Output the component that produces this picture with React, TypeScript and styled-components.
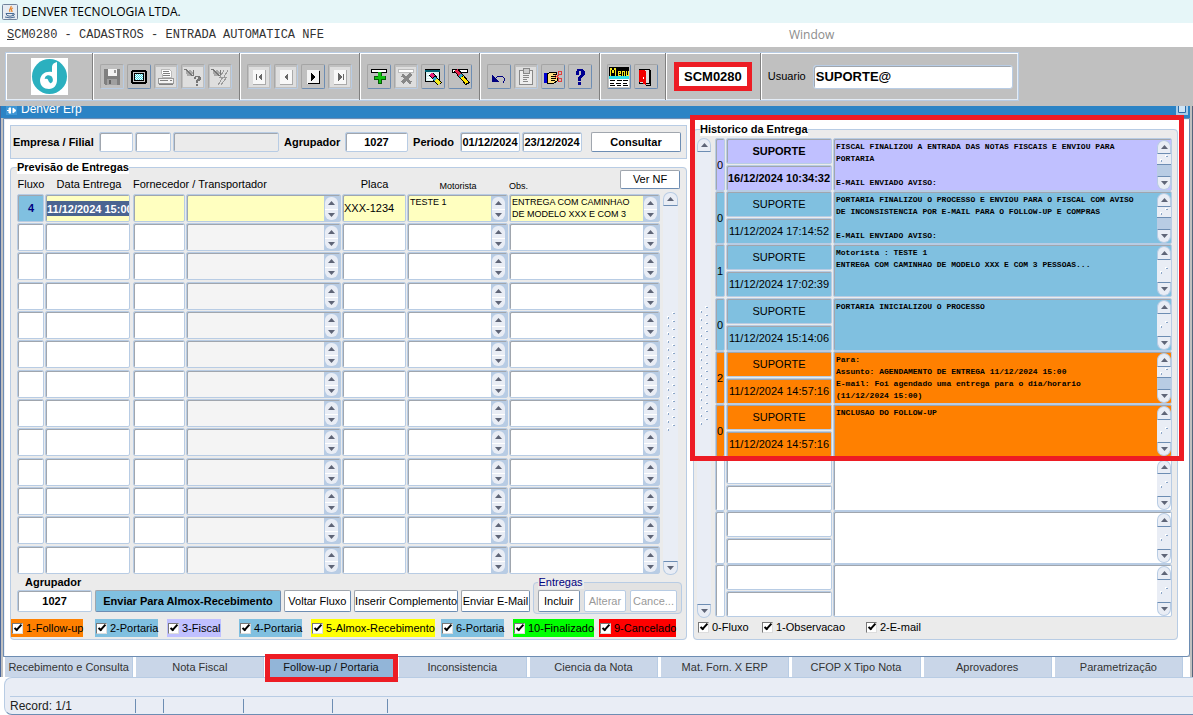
import React from "react";
import styled, { createGlobalStyle, css } from "styled-components";

const c = {
  gray: "#c0c0c0",
  line: "#b8cce4",
  steel: "#6d8db3",
  shade: "#a0a6ae",
  panel: "#ebebeb",
  metal: "#e9edf5",
  blue: "#80c0e0",
  lilac: "#c0c0ff",
  orange: "#ff8000",
  yellow: "#ffffc0",
  red: "#ed1c24",
};

const Global = createGlobalStyle`
  *, *::before, *::after { box-sizing: border-box; }
  body { margin: 0; background: #fff; font: 11px/13px "Liberation Sans", Arial, sans-serif; color: #000; }
  button, input, textarea { font: inherit; color: inherit; border-radius: 0; margin: 0; }
`;

/* ---------- window chrome ---------- */

const TitleBar = styled.header`
  height: 23px;
  padding: 0 2px;
  display: flex;
  align-items: center;
  gap: 4px;
  background: #e6f6f8;
  font: 12px/16px "Open Sans", "Noto Sans", sans-serif;
`;

const MenuBar = styled.nav`
  height: 24px;
  padding: 0 7px;
  display: grid;
  grid-template-columns: 782px 1fr;
  align-items: center;
`;

const MenuItem = styled.button<{ $mono?: boolean }>`
  justify-self: start;
  padding: 0;
  border: 0;
  background: none;
  color: ${(p) => (p.$mono ? "#333" : "#8c8c8c")};
  font: ${(p) =>
    p.$mono
      ? '12px/16px "Liberation Mono", monospace'
      : '12px/16px "Open Sans", "Noto Sans", sans-serif'};
`;

const ToolArea = styled.div`
  padding: 5px 5px 5px;
  display: flex;
  background: ${c.gray};
`;

const ToolBox = styled.div`
  height: 49px;
  display: flex;
  border: 1px solid ${c.line};
  box-shadow: inset 1px 1px 0 #fff, inset -1px -1px 0 #e4ecf5;
`;

const Group = styled.div`
  padding: 0 7px;
  display: flex;
  align-items: center;
  gap: 3px;
  & + & {
    border-left: 1px solid #808080;
    box-shadow: inset 1px 0 0 #fff;
  }
  &:first-child {
    width: 86px;
    justify-content: center;
  }
`;

const UserGroup = styled(Group)`
  gap: 7px;
  padding: 0 5px 0 7px;
`;

const ToolButton = styled.button`
  width: 24px;
  height: 25px;
  padding: 0;
  display: grid;
  place-items: center;
  background: ${c.gray};
  border: 1px solid;
  border-color: #a5a5a5 ${c.steel} ${c.steel} #a5a5a5;
  border-radius: 2px;
  &:disabled {
    border-color: #a8a8a8 ${c.line} ${c.line} #a8a8a8;
  }
`;

const ProgramCode = styled.strong`
  padding: 0 5px;
  border: 5px solid ${c.red};
  background: #fff;
  font-size: 13px;
  line-height: 19px;
`;

const CodeGroup = styled(Group)`
  padding: 0 8px;
`;

const UserInput = styled.input`
  width: 200px;
  height: 24px;
  padding: 0 2px;
  border: 1px solid ${c.line};
  border-radius: 3px;
  box-shadow: inset 1px 1px 0 ${c.shade};
  font-size: 13px;
  font-weight: bold;
`;

const Frame = styled.div`
  padding: 0 2px;
  background: ${c.gray};
  border-left: 1px solid #4a689c;
  border-right: 1px solid #55657c;
`;

const BlueBar = styled.div`
  height: 12px;
  margin-left: -2px;
  padding: 0 2px 0 5px;
  display: flex;
  justify-content: space-between;
  overflow: hidden;
  background: #2b83c5;
  color: #fff;
  font-size: 12px;
  line-height: 6px;
`;

const BarTitle = styled.div`
  display: flex;
  gap: 4px;
`;

const Sheet = styled.main`
  padding: 4px 11px 16px 6px;
  display: grid;
  grid-template-columns: 677fr 485fr;
  gap: 6px;
  background: #fff;
  border: 1px solid ${c.steel};
  border-radius: 0 0 3px 0;
  box-shadow: inset 1px 1px 0 #e9eef6;
`;

const Left = styled.div`
  min-width: 0;
`;

/* ---------- fields and buttons ---------- */

const inset = css`
  border: 1px solid ${c.line};
  border-radius: 2px;
  box-shadow: inset 1px 1px 0 ${c.shade};
`;

const Field = styled.input<{ $w?: number; $grow?: boolean }>`
  ${inset}
  width: ${(p) => p.$w ?? 60}px;
  min-width: 0;
  flex: ${(p) => (p.$grow ? "1 1 auto" : "none")};
  height: 20px;
  padding: 0 1px;
  background: #fff;
  font-weight: bold;
  text-align: center;
  &:disabled {
    background: ${c.panel};
  }
`;

const Button = styled.button<{ $grow?: number; $h?: number; $bg?: string; $bold?: boolean }>`
  flex: ${(p) => (p.$grow ? `${p.$grow} 1 0` : "none")};
  min-width: 0;
  height: ${(p) => p.$h ?? 22}px;
  padding: 0;
  background: ${(p) => p.$bg ?? "#fff"};
  border: 1px solid;
  border-color: ${c.shade} ${c.steel} ${c.steel} ${c.shade};
  border-radius: 2px;
  font-weight: ${(p) => (p.$bold ? "bold" : "normal")};
  white-space: nowrap;
  &:disabled {
    color: #999;
    border-color: ${c.line};
  }
`;

const ConsultButton = styled(Button)`
  width: 90px;
  font-weight: bold;
`;

const FilterBox = styled.form`
  height: 34px;
  margin: 2px 0 2px;
  padding: 0 5px 0 2px;
  display: flex;
  align-items: center;
  gap: 2px;
  background: ${c.panel};
  border: 1px solid ${c.line};
  font-weight: bold;
`;

const FilterLabel = styled.label<{ $w: number }>`
  width: ${(p) => p.$w}px;
  white-space: nowrap;
`;

const Spacer = styled.span`
  width: 5px;
`;

const Panel = styled.fieldset`
  position: relative;
  min-width: 0;
  margin: 0;
  padding: 0 0 2px;
  background: ${c.panel};
  border: 1px solid ${c.line};
  border-radius: 4px;
`;

const PanelLegend = styled.legend`
  margin-left: 6px;
  padding: 0;
  background: #fff;
  font-weight: bold;
`;

/* ---------- scroll parts ---------- */

const Arrow = ({ down }: { down?: boolean }) => (
  <svg width="7" height="4" viewBox="0 0 7 4" aria-hidden>
    <path d={down ? "M0 0h7L3.500 4z" : "M0 4h7L3.500 0z"} fill="#5f6577" />
  </svg>
);

const ArrowButton = styled.button<{ $down?: boolean }>`
  width: 100%;
  height: 14px;
  padding: 0;
  display: grid;
  place-items: center;
  background: ${c.metal};
  border: 1px solid ${c.line};
  ${(p) =>
    p.$down
      ? `border-top-color: ${c.steel}; border-radius: 0 0 7px 7px;`
      : `border-bottom-color: ${c.steel}; border-radius: 7px 7px 0 0;`}
`;

const Track = styled.div<{ $dots: "tall" | "short" | "half" }>`
  flex: 1;
  display: grid;
  background: ${(p) => (p.$dots === "half" ? c.line : c.metal)};
  place-items: ${(p) => (p.$dots === "half" ? "start stretch" : "center")};
  padding-bottom: ${(p) => (p.$dots === "tall" ? 24 : 0)}px;
`;

const Thumb = styled.div`
  height: 11px;
  display: grid;
  place-items: center;
  background: ${c.metal};
  border-bottom: 1px solid ${c.steel};
`;

const ScrollColumn = styled.div<{ $pad?: number; $w?: number }>`
  width: ${(p) => p.$w ?? 15}px;
  margin-top: ${(p) => p.$pad ?? 0}px;
  flex: none;
  display: flex;
  flex-direction: column;
`;

const Dots = ({ n }: { n: number }) => (
  <svg width="8" height={n * 8} viewBox={`0 0 8 ${n * 8}`} shapeRendering="crispEdges" aria-hidden>
    {Array.from({ length: n }, (_, i) => (
      <g key={i}>
        <path d={`M0 ${i * 8 + 4}h2v2h-2zM5 ${i * 8}h2v2h-2z`} fill="#fff" />
        <path d={`M1 ${i * 8 + 5}h1v1h-1zM1 ${i * 8 + 6}h1v1h-1zM6 ${i * 8 + 1}h2v1h-2z`} fill="#8ba6c8" />
      </g>
    ))}
  </svg>
);

const Scroll = ({ dots, pad, w }: { dots: "tall" | "short" | "half"; pad?: number; w?: number }) => (
  <ScrollColumn $pad={pad} $w={w}>
    <ArrowButton type="button" aria-label="Rolar para cima"><Arrow /></ArrowButton>
    <Track $dots={dots}>
      {dots === "tall" && <Dots n={15} />}
      {dots === "short" && <Dots n={1} />}
      {dots === "half" && <Thumb><Dots n={1} /></Thumb>}
    </Track>
    <ArrowButton type="button" $down aria-label="Rolar para baixo"><Arrow down /></ArrowButton>
  </ScrollColumn>
);

const SpinBox = styled.div`
  flex: none;
  width: 16px;
  padding: 1px 2px 1px 1px;
  display: grid;
  grid-template-rows: 1fr 1fr;
  background: ${c.line};
`;

const SpinButton = styled.button`
  padding: 0;
  border: 0;
  display: grid;
  place-items: center;
  background: ${c.metal};
  border-radius: 6px 6px 0 0;
  & + & {
    border-top: 1px solid #fff;
    border-radius: 0 0 6px 6px;
  }
`;

const Spin = () => (
  <SpinBox>
    <SpinButton type="button" aria-label="Linha anterior"><Arrow /></SpinButton>
    <SpinButton type="button" aria-label="Linha seguinte"><Arrow down /></SpinButton>
  </SpinBox>
);

/* ---------- deliveries table ---------- */

const VerNfRow = styled.div`
  margin: -4px 6px 0 0;
  display: flex;
  justify-content: flex-end;
`;

const VerNf = styled(Button)`
  width: 60px;
`;

const TableRow = styled.div`
  margin: -11px 8px 0 6px;
  display: flex;
  gap: 2px;
`;

const Table = styled.table`
  flex: 1;
  width: 0;
  table-layout: fixed;
  border-collapse: collapse;
  th, td { padding: 0; vertical-align: top; }
`;

const Head = styled.th<{ $left?: boolean; $small?: boolean }>`
  height: 14px;
  font-weight: normal;
  font-size: ${(p) => (p.$small ? 9 : 11)}px;
  line-height: ${(p) => (p.$small ? 16 : 12)}px;
  text-align: ${(p) => (p.$left ? "left" : "center")};
`;

const HeadRow = styled.tr`
  height: 14px;
`;

const DeliveryRow = styled.tr`
  height: 29px;
  &:nth-child(3n) { height: 30px; }
`;

const Cell = styled.div<{ $bg?: string; $gap?: number }>`
  ${inset}
  height: 28px;
  margin-right: ${(p) => p.$gap ?? 1}px;
  padding: 1px 0 0 1px;
  display: flex;
  background: ${(p) => p.$bg ?? "#fff"};
`;

const CellInput = styled.input<{ $selected?: boolean; $center?: boolean; $color?: string }>`
  flex: 1;
  min-width: 0;
  width: 0;
  padding: 0;
  border: 0;
  background: none;
  outline: 0;
  text-align: ${(p) => (p.$center ? "center" : "left")};
  ${(p) => p.$color && `color: ${p.$color}; font-weight: bold;`}
  ${(p) =>
    p.$selected &&
    "height: 15px; margin-top: 5px; background: #4a6491; color: #fff; font-weight: bold;"}
`;

const CellText = styled.textarea`
  flex: 1;
  min-width: 0;
  width: 0;
  padding: 0 0 0 1px;
  border: 0;
  background: none;
  outline: 0;
  resize: none;
  overflow: hidden;
  font-size: 9px;
  line-height: 12px;
`;

const deliveries = [
  { fluxo: "4", data: "11/12/2024 15:00", placa: "XXX-1234", motorista: "TESTE 1", obs: "ENTREGA COM CAMINHAO\nDE MODELO XXX E COM 3" },
  ...Array.from({ length: 12 }, () => ({ fluxo: "", data: "", placa: "", motorista: "", obs: "" })),
];

/* ---------- footer of the deliveries panel ---------- */

const ActionRow = styled.div`
  margin: 1px 4px 0 6px;
  display: grid;
  grid-template-columns: 75fr 185fr 67fr 104fr 68fr 149fr;
  align-items: end;
  gap: 3px;
  & > ${Button} { margin-bottom: 2px; }
`;

const Stack = styled.div`
  min-width: 0;
  margin-bottom: 2px;
  display: flex;
  flex-direction: column;
  gap: 1px;
  font-weight: bold;
  label { padding-left: 8px; }
`;

const StackField = styled(Field)`
  width: 100%;
  height: 22px;
`;

const Entregas = styled.fieldset`
  min-width: 0;
  margin: 0;
  padding: 1px 4px;
  display: flex;
  gap: 4px;
  background: #e2e2e2;
  border: 1px solid ${c.line};
  border-radius: 4px;
  legend { padding: 0 1px; background: ${c.panel}; color: #000080; }
`;

const ChecksRow = styled.div`
  margin-top: 5px;
  display: grid;
  grid-template-columns: 84fr 72fr 72fr 72fr 130fr 72fr 86fr 87fr;
`;

const Check = styled.label<{ $bg?: string }>`
  justify-self: start;
  height: 18px;
  padding-left: 1px;
  display: flex;
  align-items: center;
  gap: 3px;
  background: ${(p) => p.$bg ?? "transparent"};
  white-space: nowrap;
  line-height: 18px;
`;

const Tick = styled.input`
  appearance: none;
  width: 11px;
  height: 11px;
  background: #fff;
  border: 1px solid;
  border-color: #777 #ddd #ddd #777;
  display: grid;
  place-items: center;
  &:checked::before {
    content: "";
    width: 8px;
    height: 4px;
    margin-top: -2px;
    border: solid #000;
    border-width: 0 0 2px 2px;
    transform: rotate(-48deg);
  }
`;

const flows: [string, string][] = [
  ["1-Follow-up", c.orange],
  ["2-Portaria", c.blue],
  ["3-Fiscal", c.lilac],
  ["4-Portaria", c.blue],
  ["5-Almox-Recebimento", "#ffff00"],
  ["6-Portaria", c.blue],
  ["10-Finalizado", "#00ff00"],
  ["9-Cancelado", "#ff0000"],
];

/* ---------- history ---------- */

const HistoryBody = styled.div`
  margin: 2px 5px 0 3px;
  display: flex;
  gap: 4px;
`;

const HistoryRow = styled.tr`
  height: 53px;
  &:nth-child(3n) { height: 54px; }
`;

const HistoryCell = styled(Cell)`
  height: 53px;
`;

const Kind = styled.input`
  flex: 1;
  width: 0;
  min-width: 0;
  padding: 0;
  border: 0;
  background: none;
  text-align: left;
`;

const Pair = styled.div`
  margin-right: 1px;
  display: grid;
  grid-template-rows: 26px 26px;
  gap: 1px;
`;

const PairInput = styled.input<{ $bg: string; $bold?: boolean }>`
  ${inset}
  width: 100%;
  min-width: 0;
  padding: 1px 0 0;
  background: ${(p) => p.$bg};
  font-weight: ${(p) => (p.$bold ? "bold" : "normal")};
  text-align: center;
`;

const Message = styled(CellText)`
  padding: 1px 0 0 1px;
  font: bold 8px/12px "Liberation Mono", monospace;
  white-space: pre-wrap;
`;

const HistoryChecks = styled.div`
  padding: 0 4px 1px 3px;
  display: flex;
  & > :nth-child(1) { width: 64px; }
  & > :nth-child(2) { width: 104px; }
`;

const Highlight = styled.div`
  position: absolute;
  z-index: 2;
  top: -21px;
  left: -4px;
  right: -7px;
  height: 346px;
  border: 5px solid ${c.red};
  pointer-events: none;
`;

type Entry = { kind: string; user: string; when: string; text: string; bg: string; half?: boolean };

const blank: Entry = { kind: "", user: "", when: "", text: "", bg: "#fff" };

const history: Entry[] = [
  { kind: "0", user: "SUPORTE", when: "16/12/2024 10:34:32", bg: c.lilac, half: true, text: "FISCAL FINALIZOU A ENTRADA DAS NOTAS FISCAIS E ENVIOU PARA\nPORTARIA\n\nE-MAIL ENVIADO AVISO:" },
  { kind: "0", user: "SUPORTE", when: "11/12/2024 17:14:52", bg: c.blue, half: true, text: "PORTARIA FINALIZOU O PROCESSO E ENVIOU PARA O FISCAL COM AVISO\nDE INCONSISTENCIA POR E-MAIL PARA O FOLLOW-UP E COMPRAS\n\nE-MAIL ENVIADO AVISO:" },
  { kind: "1", user: "SUPORTE", when: "11/12/2024 17:02:39", bg: c.blue, text: "Motorista : TESTE 1\nENTREGA COM CAMINHAO DE MODELO XXX E COM 3 PESSOAS..." },
  { kind: "0", user: "SUPORTE", when: "11/12/2024 15:14:06", bg: c.blue, text: "PORTARIA INICIALIZOU O PROCESSO" },
  { kind: "2", user: "SUPORTE", when: "11/12/2024 14:57:16", bg: c.orange, half: true, text: "Para:\nAssunto: AGENDAMENTO DE ENTREGA 11/12/2024 15:00\nE-mail: Foi agendado uma entrega para o dia/horario\n(11/12/2024 15:00)" },
  { kind: "0", user: "SUPORTE", when: "11/12/2024 14:57:16", bg: c.orange, text: "INCLUSAO DO FOLLOW-UP" },
  blank, blank, blank,
];

/* ---------- tabs and status ---------- */

const Tabs = styled.nav`
  padding: 0 7px 0 2px;
  display: grid;
  grid-template-columns: repeat(9, 1fr);
  gap: 3px;
  background: #fff;
`;

const Tab = styled.button<{ $on?: boolean }>`
  position: relative;
  height: 20px;
  padding: 0;
  background: ${(p) => (p.$on ? "#92b5d8" : "#c9d6e8")};
  border: 0;
  border-right: 1px solid ${c.line};
  color: ${(p) => (p.$on ? "#111" : "#333")};
  white-space: nowrap;
  ${(p) =>
    p.$on &&
    `&::after {
      content: "";
      position: absolute;
      z-index: 2;
      inset: -3px -3px -5px -2px;
      border: 5px solid ${c.red};
    }`}
`;

const tabs = ["Recebimento e Consulta", "Nota Fiscal", "Follow-up / Portaria", "Inconsistencia", "Ciencia da Nota", "Mat. Forn. X ERP", "CFOP X Tipo Nota", "Aprovadores", "Parametrização"];

const Status = styled.footer`
  margin-left: 4px;
  padding: 18px 0 0 5px;
  background: ${c.metal};
  border: solid;
  border-width: 1px 0 1px 1px;
  border-color: ${c.line} ${c.line} ${c.steel};
  border-radius: 8px 0 0 8px;
`;

const StatusLine = styled.div`
  height: 18px;
  display: grid;
  grid-template-columns: 126px 28px 80px 89px 55px 1fr;
  align-items: center;
  border-top: 1px solid ${c.line};
  font-size: 12px;
  color: #222;
`;

const Slot = styled.span`
  height: 14px;
  padding-top: 1px;
  &:not(:last-child) { border-right: 1px solid ${c.steel}; }
`;

/* ---------- icons ---------- */

const Ico = ({ children, s = 20 }: { children: React.ReactNode; s?: number }) => (
  <svg width={s} height={s} viewBox={`0 0 ${s} ${s}`} shapeRendering="crispEdges" aria-hidden>
    {children}
  </svg>
);

const Pale = () => <path d="M0 0h20v20h-20z" fill="#dedede" />;

const icons: Record<string, React.ReactNode> = {
  save: (
    <Ico><path d="M2 2h15l1 1v15h-15l-1-1z" fill="#808080" /><path d="M6 2h9v7h-9z" fill="#f4f4f4" /><path d="M12 3h2v3h-2z" fill="#999" /><path d="M5 12h10v6h-10z" fill="#a0a0a0" /><path d="M7 13h2v4h-2z" fill="#666" /></Ico>
  ),
  screen: (
    <Ico>
      <path d="M3 3h14v1h1v12h-1v1h-14v-1h-1v-12h1z" fill="#000" />
      <path d="M4 5h12v10h-12z" fill="#c8c8c8" />
      <path d="M5.500 6.500h9v7h-9z" fill="#39d5e0" stroke="#000" />
      <path d="M6 7.500h8M6 9.500h8M6 11.500h8" stroke="#fff" strokeDasharray="1 1" />
      <path d="M7 8.500h7M7 10.500h7M7 12.500h7" stroke="#fff" strokeDasharray="1 1" />
    </Ico>
  ),
  print: (
    <Ico><Pale /><path d="M5.500 2.500h8l2 2v6h-9z" fill="#fff" stroke="#bbb" /><path d="M7 4.500h6M7 6.500h7M7 8.500h7" stroke="#808080" /><path d="M2.500 11.500h15v5h-15z" fill="#f4f4f4" stroke="#999" /><path d="M4 13.500h8M3 17.500h14" stroke="#808080" /><path d="M14 13h2v1h-2z" fill="#808080" /></Ico>
  ),
  query: (
    <Ico><Pale /><path d="M3 4l5-1 2 3-2 3-4 0z" fill="#aaa" /><path d="M1 2h2v1h1v1h1v1h1v1h1v1h1v1h2v-5" stroke="#777" fill="none" /><path d="M12 9h5v1h1v3h-1v1h-2v2h-2v-3h1v-1h1v-2h-2v2h-2v-2h1zM13 17h2v2h-2z" fill="#777" /></Ico>
  ),
  exec: (
    <Ico><Pale /><path d="M3 4l5-1 2 3-2 3-4 0z" fill="#aaa" /><path d="M1 2h2v1h1v1h1v1h1v1h1v1h1v1h2v-5" stroke="#777" fill="none" /><path d="M14 3l-4 7h3l-5 8M18 3l-4 7h3l-6 8" stroke="#999" fill="none" /></Ico>
  ),
  first: (
    <Ico><Pale /><path d="M4 3h12v14h-12z" fill="#f8f8f8" /><path d="M4 17h13M16.500 3v14" stroke="#aaa" /><path d="M7 7h1v6h-1zM13 6v8l-4-4z" fill="#666" /></Ico>
  ),
  prev: (
    <Ico><Pale /><path d="M4 3h12v14h-12z" fill="#f8f8f8" /><path d="M4 17h13M16.500 3v14" stroke="#aaa" /><path d="M12 6v8l-4-4z" fill="#666" /></Ico>
  ),
  next: (
    <Ico><path d="M4 3h12v14h-12z" fill="#f4f4f4" /><path d="M5 16.500h12M16.500 4v13" stroke="#000" /><path d="M8 6v8l5-4z" fill="#000" /></Ico>
  ),
  last: (
    <Ico><Pale /><path d="M4 3h12v14h-12z" fill="#f8f8f8" /><path d="M4 17h13M16.500 3v14" stroke="#aaa" /><path d="M13 7h1v6h-1zM8 6v8l4-4z" fill="#666" /></Ico>
  ),
  add: (
    <Ico><path d="M2.500 2.500h15v3h-15z" fill="#fff" stroke="#000" /><path d="M9 5h4v4h4v4h-4v4h-4v-4h-4v-4h4z" fill="#065c06" /><path d="M9 5h3v4h4v3h-4v4h-2v-4h-4v-2h3z" fill="#10c010" /></Ico>
  ),
  remove: (
    <Ico><Pale /><path d="M2.500 2.500h15v3h-15z" fill="#fff" stroke="#bbb" /><path d="M6 8l9 8M15 7l-9 9" stroke="#888" strokeWidth="3" /></Ico>
  ),
  clear: (
    <Ico><path d="M2.500 2.500h14v12h-14z" fill="#d8f0f0" stroke="#000" /><path d="M2 4h15" stroke="#006070" strokeWidth="2" /><path d="M4 7.500h10M4 10.500h6M4 12.500h8" stroke="#fff" /><path d="M8 7l9 10" stroke="#000" strokeWidth="5" /><path d="M8 7l3 3" stroke="#e8207c" strokeWidth="4" /><path d="M11 11l2 2" stroke="#30a8d0" strokeWidth="3" /><path d="M13 13l4 4" stroke="#f0e820" strokeWidth="3" /></Ico>
  ),
  erase: (
    <Ico><path d="M2.500 2.500h15v3h-15z" fill="#fff" stroke="#000" /><path d="M6 3l12 14" stroke="#000" strokeWidth="5" /><path d="M6 3l4 5" stroke="#e8204c" strokeWidth="3" /><path d="M10 8l2 2" stroke="#30a8c0" strokeWidth="3" /><path d="M12 10l5 6" stroke="#ffe600" strokeWidth="3" /></Ico>
  ),
  undo: (
    <Ico><path d="M3 8v7h7z" fill="#000080" /><path d="M6 12l3-3h4l2 2v3l-1 2" stroke="#000080" fill="none" /></Ico>
  ),
  clip: (
    <Ico><Pale /><path d="M3.500 3.500h13v14h-13z" fill="#eee" stroke="#888" /><path d="M7 1h6v5h-6z" fill="#ccc" stroke="#888" /><path d="M7 8.500h6M7 10.500h6M7 12.500h4M7 14.500h5" stroke="#888" /></Ico>
  ),
  hand: (
    <Ico><path d="M1 6h3v10h-3z" fill="#0000d0" /><path d="M4 7l4-2h5v2h-3l4 1v6l-3 2h-7z" fill="#ffe080" stroke="#000" /><path d="M8 9.500h5M8 11.500h5M8 13.500h4" stroke="#000" /><path d="M12 8l5 4M12 11l5-4M15.500 4.500h3v3h-3zM15.500 11.500h3v3h-3z" stroke="#e04040" fill="none" /></Ico>
  ),
  help: (
    <Ico><path d="M6 3h1v-1h6v1h1v1h1v4h-1v1h-1v1h-1v1h-1v3h-3v-4h1v-1h1v-1h1v-4h-2v4h-3v-4h1zM8 15h3v3h-3z" fill="#000090" /></Ico>
  ),
  menu: (
    <Ico><path d="M0 0h20v9h-20z" fill="#000" /><path d="M1.500 9v-7.500h1l1.500 4 1.500-4h1v7.500M11.500 4.500h-2.500v3.500h3M9 6.500h2.500v-2M13.500 9v-4.500h2v4.500M17.500 4v4.500h2v-4.500" stroke="#f5e820" fill="none" /><path d="M0 9h20v3h-20z" fill="#30e0e8" /><path d="M0 12h20v8h-20z" fill="#fff" /><path d="M1 13.500h5M8 13.500h5M14 13.500h5M1 16.500h4M7 16.500h5M14 16.500h4M1 18.500h5M8 18.500h4M14 18.500h5" stroke="#000" /></Ico>
  ),
  exit: (
    <Ico><path d="M3.500 2.500h10v14h-10z" fill="#ddd" stroke="#000" /><path d="M3 3h4l3 1v14l-3-1v-2h-4z" fill="#f00000" /><path d="M7 10h1v2h-1z" fill="#fff" /><path d="M14 3v15h-4" stroke="#000" fill="none" /></Ico>
  ),
};

const JavaIcon = () => (
  <svg width="16" height="16" viewBox="0 0 16 16" aria-hidden>
    <rect x=".5" y=".5" width="15" height="15" rx="1" fill="#e6ebf2" stroke="#70839c" />
    <path d="M9 2c1 2-3 3-1 6M11 4c-3 1-1 2-1 4" stroke="#e8852a" fill="none" strokeWidth="1.300" />
    <path d="M4 9.500h7v2q-3 1.500-6 0zM11 9.500q3 0 0 2.500M3 13q5 1.800 10 0" stroke="#476a94" fill="none" />
  </svg>
);

const Logo = () => (
  <svg width="37" height="37" viewBox="0 0 37 37" role="img" aria-label="Denver">
    <path d="M0 0h37v37h-37z" fill="#fff" />
    <circle cx="18.500" cy="18.500" r="17.500" fill="#2bb0bf" />
    <path d="M26 4C22 5 21 7 21 10V14C14 13 10 16 9 22C9 28 13 31 18 31C23 31 26 27 26 22z" fill="#fff" />
    <path d="M20 18C16 16 13 19 14 22L17 22Q18 26 20 25C23 24 22 19 20 18z" fill="#2bb0bf" />
    <path d="M13 21q4-1 4 1 0 2 2 3-4 3-6-1z" fill="#fff" />
  </svg>
);

type Tool = [keyof typeof icons, string, boolean?];

const toolGroups: Tool[][] = [
  [["save", "Salvar", true], ["screen", "Tela"], ["print", "Imprimir", true], ["query", "Consultar", true], ["exec", "Executar consulta", true]],
  [["first", "Primeiro", true], ["prev", "Anterior", true], ["next", "Próximo"], ["last", "Último", true]],
  [["add", "Inserir registro"], ["remove", "Remover registro", true], ["clear", "Limpar bloco"], ["erase", "Limpar registro"]],
  [["undo", "Desfazer"], ["clip", "Colar", true], ["hand", "Recortar"], ["help", "Ajuda"]],
  [["menu", "Menu"], ["exit", "Sair"]],
];

export default function App() {
  return (
    <>
      <Global />
      <TitleBar><JavaIcon />DENVER TECNOLOGIA LTDA.</TitleBar>
      <MenuBar>
        <MenuItem $mono><u>S</u>CM0280 - CADASTROS - ENTRADA AUTOMATICA NFE</MenuItem>
        <MenuItem>Window</MenuItem>
      </MenuBar>
      <ToolArea>
        <ToolBox>
          <Group><Logo /></Group>
          {toolGroups.map((group, i) => (
            <Group key={i}>
              {group.map(([icon, label, off]) => (
                <ToolButton key={icon} aria-label={label} disabled={off}>{icons[icon]}</ToolButton>
              ))}
            </Group>
          ))}
          <CodeGroup><ProgramCode>SCM0280</ProgramCode></CodeGroup>
          <UserGroup>
            <label htmlFor="usuario">Usuario</label>
            <UserInput id="usuario" defaultValue="SUPORTE@" />
          </UserGroup>
        </ToolBox>
      </ToolArea>

      <Frame>
        <BlueBar>
          <BarTitle>
            <svg width="11" height="10" viewBox="0 0 11 10" aria-hidden>
              <path d="M0 0h11v9h-11z" fill="#3f97d6" />
              <path d="M5 2H3v5h2M1 4.500h3M7 2v5l3-2.500z" stroke="#fff" fill="#fff" />
            </svg>
            <span>Denver Erp</span>
          </BarTitle>
          <svg width="12" height="9" viewBox="0 0 12 9" aria-hidden>
            <path d="M0 0h12v9h-12z" fill="#a9cdea" />
            <path d="M2.500 0v6.500h7V0" stroke="#2b6ca8" fill="#cfe5f6" />
          </svg>
        </BlueBar>

        <Sheet>
          <Left>
            <FilterBox onSubmit={(e) => e.preventDefault()}>
              <FilterLabel $w={84} htmlFor="empresa">Empresa / Filial</FilterLabel>
              <Field id="empresa" $w={34} />
              <Field aria-label="Filial" $w={36} />
              <Field aria-label="Nome da filial" $w={90} $grow disabled />
              <FilterLabel $w={62} htmlFor="agrupador">&nbsp;Agrupador</FilterLabel>
              <Field id="agrupador" $w={63} defaultValue="1027" />
              <FilterLabel $w={48} htmlFor="inicio">&nbsp;Periodo</FilterLabel>
              <Field id="inicio" $w={60} defaultValue="01/12/2024" />
              <Field aria-label="Fim do periodo" $w={60} defaultValue="23/12/2024" />
              <Spacer />
              <ConsultButton $h={20} $bold>Consultar</ConsultButton>
            </FilterBox>

            <Panel>
              <PanelLegend>Previsão de Entregas</PanelLegend>
              <VerNfRow><VerNf $h={19} type="button">Ver NF</VerNf></VerNfRow>
              <TableRow>
                <Table>
                  <colgroup>
                    <col width="28" /><col width="88" /><col width="53" /><col />
                    <col width="65" /><col width="102" /><col width="152" />
                  </colgroup>
                  <thead>
                    <HeadRow>
                      <Head>Fluxo</Head>
                      <Head>Data Entrega</Head>
                      <Head colSpan={2} $left>Fornecedor / Transportador</Head>
                      <Head>Placa</Head>
                      <Head $small>Motorista</Head>
                      <Head $left $small>Obs.</Head>
                    </HeadRow>
                  </thead>
                  <tbody>
                    {deliveries.map((d, i) => {
                      const first = i === 0;
                      const bg = first ? c.yellow : undefined;
                      return (
                        <DeliveryRow key={i}>
                          <td><Cell $bg={first ? c.blue : undefined}><CellInput aria-label="Fluxo" $center $color="#000080" defaultValue={d.fluxo} /></Cell></td>
                          <td><Cell $gap={3} $bg={bg}><CellInput aria-label="Data Entrega" $selected={first} defaultValue={d.data} /></Cell></td>
                          <td><Cell $bg={bg}><CellInput aria-label="Fornecedor" /></Cell></td>
                          <td><Cell $bg={bg ?? "#f4f4f4"}><CellText aria-label="Transportador" /><Spin /></Cell></td>
                          <td><Cell $bg={bg}><CellInput aria-label="Placa" defaultValue={d.placa} /></Cell></td>
                          <td><Cell $bg={bg}><CellText aria-label="Motorista" defaultValue={d.motorista} /><Spin /></Cell></td>
                          <td><Cell $bg={bg}><CellText aria-label="Obs." defaultValue={d.obs} /><Spin /></Cell></td>
                        </DeliveryRow>
                      );
                    })}
                  </tbody>
                </Table>
                <Scroll dots="tall" pad={14} />
              </TableRow>

              <ActionRow>
                <Stack>
                  <label htmlFor="agrupador2">Agrupador</label>
                  <StackField id="agrupador2" defaultValue="1027" />
                </Stack>
                <Button $bold $bg={c.blue}>Enviar Para Almox-Recebimento</Button>
                <Button>Voltar Fluxo</Button>
                <Button>Inserir Complemento</Button>
                <Button>Enviar E-Mail</Button>
                <Entregas>
                  <legend>Entregas</legend>
                  <Button $grow={42}>Incluir</Button>
                  <Button $grow={42} disabled>Alterar</Button>
                  <Button $grow={47} disabled>Cance...</Button>
                </Entregas>
              </ActionRow>
              <ChecksRow>
                {flows.map(([name, bg]) => (
                  <Check key={name} $bg={bg}><Tick type="checkbox" defaultChecked />{name}</Check>
                ))}
              </ChecksRow>
            </Panel>
          </Left>

          <Panel>
            <PanelLegend>Historico da Entrega</PanelLegend>
            <HistoryBody>
              <Scroll dots="tall" w={14} />
              <Table>
                <colgroup><col width="11" /><col width="107" /><col /></colgroup>
                <tbody>
                  {history.map((h, i) => (
                    <HistoryRow key={i}>
                      <td><HistoryCell $bg={h.bg}><Kind aria-label="Tipo" defaultValue={h.kind} /></HistoryCell></td>
                      <td>
                        <Pair>
                          <PairInput aria-label="Usuario" $bg={h.bg} $bold={i === 0} defaultValue={h.user} />
                          <PairInput aria-label="Data" $bg={h.bg} $bold={i === 0} defaultValue={h.when} />
                        </Pair>
                      </td>
                      <td>
                        <HistoryCell $bg={h.bg} $gap={0}>
                          <Message aria-label="Historico" defaultValue={h.text} />
                          <Scroll dots={h.half ? "half" : "short"} w={14} />
                        </HistoryCell>
                      </td>
                    </HistoryRow>
                  ))}
                </tbody>
              </Table>
            </HistoryBody>
            <HistoryChecks>
              {["0-Fluxo", "1-Observacao", "2-E-mail"].map((name) => (
                <Check key={name}><Tick type="checkbox" defaultChecked />{name}</Check>
              ))}
            </HistoryChecks>
            <Highlight />
          </Panel>
        </Sheet>

        <Tabs>
          {tabs.map((t, i) => (
            <Tab key={t} $on={i === 2}>{t}</Tab>
          ))}
        </Tabs>
      </Frame>

      <Status>
        <StatusLine>
          <Slot>Record: 1/1</Slot><Slot /><Slot /><Slot /><Slot /><Slot />
        </StatusLine>
      </Status>
    </>
  );
}
